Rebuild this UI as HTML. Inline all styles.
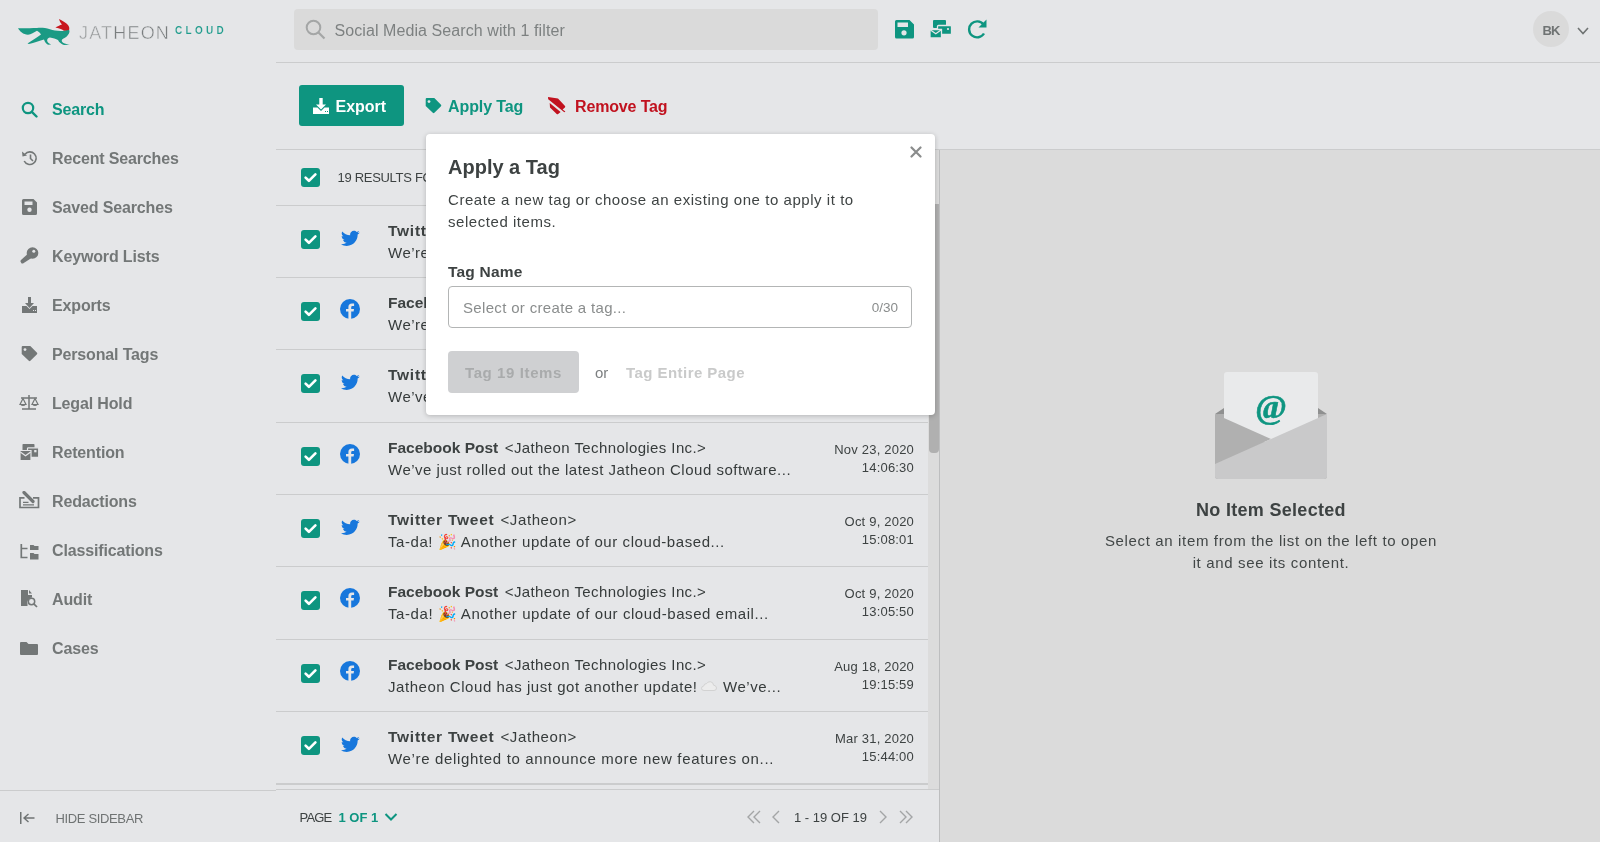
<!DOCTYPE html>
<html><head><meta charset="utf-8">
<style>
*{margin:0;padding:0;box-sizing:border-box}
html,body{width:1600px;height:842px;overflow:hidden;background:#e5e6e8;font-family:"Liberation Sans",sans-serif;position:relative}
body{will-change:transform}
.a{position:absolute}
.t{position:absolute;line-height:1;white-space:nowrap}
.b{font-weight:bold}
.nav{font-size:16px;font-weight:bold;color:#737777;left:52px;letter-spacing:-0.15px}
.ic{position:absolute}
.hl{position:absolute;height:1px;background:#cbcccd}
.cb{position:absolute;left:301px;width:19px;height:19px;border-radius:3px;background:#0e9580}
.cb svg{position:absolute;left:0;top:0}
.em{font-style:normal;font-size:15px;letter-spacing:0}
.cld{display:inline-block;vertical-align:1px;margin:0 1px 0 -1px}
.ttl{font-size:15.5px;font-weight:bold;color:#3d4242;left:388px}
.snd{font-size:15px;font-weight:normal;color:#363b3b;letter-spacing:0.4px;margin-left:6.5px}
.body{font-size:15px;color:#363b3b;left:388px;letter-spacing:0.5px}
.dt{font-size:13px;color:#3d4242;right:686px;text-align:right;letter-spacing:0.2px}
</style></head><body>

<!-- SIDEBAR -->
<div class="a" id="sidebar" style="left:0;top:0;width:276px;height:842px;background:#e5e6e8"></div>

<!-- logo -->
<svg class="a" style="left:15px;top:15px" width="60" height="33" viewBox="0 0 60 33">
<path d="M3 13.3 C9 13.5 16 13.2 22 13 C26 12.6 30 12.8 35 14.3 C39 15.6 44 16.2 49 15.7 L54 14 L54.5 16.8 C54 19 52.5 21.5 49.5 23 C46.5 24 46 26 48 27.8 C50 29 53 29.3 54.8 29.8 L49 30 C46.5 29 44 27.5 43 25 C41 24 38 23 35 22.5 C32 23 31.5 25.5 33 27.5 C34 28.5 35.5 29 36 29.5 L33 29.8 C31 28.5 29.5 26.5 29 24.5 C25 25.5 19 28 14 29 L12.5 28.5 C17 25.5 22 22.5 26 19.5 C25 18 23.5 16.5 22 15.8 C19 17.5 16 19.5 13 19.8 C8 19.5 5 16.5 3 13.3 Z" fill="#1a9a84"/>
<path d="M44.1 3.9 C47 5.5 51 7.5 53 10 C54.5 12 54.5 13.5 54 14.9 L49 15.7 C47 14.3 45 13.5 40.4 12.5 C42 11.5 45 10 47 9.4 C45.5 8 44.5 6 44.1 3.9 Z" fill="#c8161e"/>
</svg>
<div class="t" style="left:79px;top:23.5px;font-size:18px;color:#7a7e7f;letter-spacing:1.2px;-webkit-text-stroke:0.45px #e5e6e8"><span style="color:#999c9d">JAT</span>HEON</div>
<div class="t b" style="left:175px;top:25.5px;font-size:10px;color:#1f9c8c;letter-spacing:3.3px;-webkit-text-stroke:0.15px #e5e6e8">CLOUD</div>

<!-- nav -->
<svg class="ic" style="left:21px;top:101px" width="17" height="17" viewBox="0 0 17 17"><circle cx="7" cy="7" r="5.2" fill="none" stroke="#0e9580" stroke-width="2.2"/><path d="M10.8 10.8 L15.5 15.5" stroke="#0e9580" stroke-width="2.4" stroke-linecap="round"/></svg>
<div class="t nav" style="top:101.5px;color:#0e9580">Search</div>

<svg class="ic" style="left:21px;top:150px" width="17" height="16" viewBox="0 0 17 16"><path d="M4 4.2 A6.3 6.3 0 1 1 3.2 11" fill="none" stroke="#737777" stroke-width="1.6"/><path d="M1 1.5 L1.5 6.5 L6 5.5 Z" fill="#737777"/><path d="M9.5 4.5 V8.5 L12 11" fill="none" stroke="#737777" stroke-width="1.6"/></svg>
<div class="t nav" style="top:150.5px">Recent Searches</div>

<svg class="ic" style="left:22px;top:199px" width="15" height="16" viewBox="0 0 15 16"><path d="M1.5 0 H11.5 L15 3.5 V14.5 Q15 16 13.5 16 H1.5 Q0 16 0 14.5 V1.5 Q0 0 1.5 0 Z M2.5 2.5 V6 H10.5 V2.5 Z" fill="#737777" fill-rule="evenodd"/><circle cx="7.5" cy="10.8" r="2.2" fill="#e5e6e8"/></svg>
<div class="t nav" style="top:199.5px">Saved Searches</div>

<svg class="ic" style="left:20px;top:247px" width="19" height="17" viewBox="0 0 19 17"><circle cx="12.5" cy="6" r="5.8" fill="#737777"/><path d="M8.2 6.5 L1 13 Q0.2 13.8 0.6 14.8 L1.4 16.2 Q2 16.8 3 16.4 L11.5 11 Z" fill="#737777"/><circle cx="13.8" cy="4.3" r="1.5" fill="#e5e6e8"/></svg>
<div class="t nav" style="top:248.5px">Keyword Lists</div>

<svg class="ic" style="left:22px;top:297px" width="15" height="16" viewBox="0 0 15 16"><path d="M6 0 H9 V6 H12 L7.5 11 L3 6 H6 Z" fill="#737777"/><path d="M0 9 H4.5 L7.5 12 L10.5 9 H15 V16 H0 Z" fill="#737777"/><path d="M11 13.5 H12 M13 13.5 H14" stroke="#e5e6e8" stroke-width="1"/></svg>
<div class="t nav" style="top:297.5px">Exports</div>

<svg class="ic" style="left:21px;top:346px" width="17" height="16" viewBox="0 0 17 16"><path d="M0.7 1 Q0.7 0 1.7 0 H9.3 L16 6.8 Q16.6 7.6 16 8.2 L9.4 14.8 Q8.6 15.5 7.8 14.8 L0.7 8 Z" fill="#737777"/><circle cx="4" cy="3.6" r="1.4" fill="#e5e6e8"/></svg>
<div class="t nav" style="top:346.5px">Personal Tags</div>

<svg class="ic" style="left:19px;top:394px" width="20" height="17" viewBox="0 0 20 17"><path d="M10 1 V15 M3 15 H17 M2 4 H18" stroke="#737777" stroke-width="1.5" fill="none"/><path d="M4 4.5 L1 10.5 H7 Z M16 4.5 L13 10.5 H19 Z" fill="none" stroke="#737777" stroke-width="1.2"/><path d="M1 10.5 Q4 13.5 7 10.5 Z M13 10.5 Q16 13.5 19 10.5 Z" fill="#737777"/></svg>
<div class="t nav" style="top:395.5px">Legal Hold</div>

<svg class="ic" style="left:20px;top:444px" width="19" height="17" viewBox="0 0 19 17"><rect x="2.5" y="0" width="12" height="8" rx="0.8" fill="#737777"/><rect x="7.5" y="3.8" width="11.2" height="9.5" rx="0.8" fill="#737777" stroke="#e5e6e8" stroke-width="1.2"/><rect x="14.2" y="6" width="2.3" height="2.3" fill="#e5e6e8"/><path d="M0 6.5 H11 V16.5 H0 Z" fill="#737777" stroke="#e5e6e8" stroke-width="1.2"/><path d="M0.3 8 L5.5 11.8 L10.7 8" fill="none" stroke="#e5e6e8" stroke-width="1.3"/></svg>
<div class="t nav" style="top:444.5px">Retention</div>

<svg class="ic" style="left:19px;top:491px" width="21" height="18" viewBox="0 0 21 18"><path d="M5.5 6.8 H1 V16.5 H19.5 V6.8 H14" fill="none" stroke="#737777" stroke-width="1.7"/><path d="M5 1.5 L14 10.5" stroke="#737777" stroke-width="3.2" stroke-linecap="round"/><path d="M4 11.3 H9.5 M4 13.8 H15" stroke="#737777" stroke-width="1.3"/></svg>
<div class="t nav" style="top:493.5px">Redactions</div>

<svg class="ic" style="left:20px;top:544px" width="19" height="16" viewBox="0 0 19 16"><path d="M1.3 0 V13.5 H7.5 M1.3 4.5 H7.5" fill="none" stroke="#737777" stroke-width="1.7"/><path d="M10 1 H13.5 L14.5 2 H18.5 V6 H10 Z M10 9 H13.5 L14.5 10 H18.5 V15.5 H10 Z" fill="#737777"/></svg>
<div class="t nav" style="top:542.5px">Classifications</div>

<svg class="ic" style="left:21px;top:590px" width="17" height="18" viewBox="0 0 17 18"><path d="M0 0 H7 V5 H11 V7.5 A5 5 0 0 0 6.5 14 V16 H0 Z" fill="#737777"/><path d="M8 0 L11 3.5 H8 Z" fill="#737777"/><circle cx="10.5" cy="11.5" r="3.2" fill="none" stroke="#737777" stroke-width="1.5"/><path d="M12.8 13.8 L16 17" stroke="#737777" stroke-width="1.7"/></svg>
<div class="t nav" style="top:591.5px">Audit</div>

<svg class="ic" style="left:20px;top:642px" width="18" height="13" viewBox="0 0 18 13"><path d="M0 1 Q0 0 1 0 H6.5 L8.5 2 H17 Q18 2 18 3 V12 Q18 13 17 13 H1 Q0 13 0 12 Z" fill="#737777"/></svg>
<div class="t nav" style="top:640.5px">Cases</div>

<div class="hl" style="left:0;top:790px;width:276px"></div>
<svg class="ic" style="left:20px;top:812px" width="15" height="12" viewBox="0 0 15 12"><path d="M0.75 0 V12" stroke="#6f7373" stroke-width="1.5"/><path d="M4 6 H14.5 M8.5 2 L4 6 L8.5 10" fill="none" stroke="#6f7373" stroke-width="1.4"/></svg>
<div class="t" style="left:55.5px;top:812px;font-size:13px;color:#6f7373;letter-spacing:-0.35px">HIDE SIDEBAR</div>

<!-- TOP BAR -->
<div class="a" style="left:294px;top:9px;width:584px;height:41px;background:#dadada;border-radius:4px"></div>
<svg class="ic" style="left:305px;top:19px" width="21" height="21" viewBox="0 0 21 21"><circle cx="8.5" cy="8.5" r="6.8" fill="none" stroke="#a4a6a6" stroke-width="2"/><path d="M13.5 13.5 L19.5 19.5" stroke="#a4a6a6" stroke-width="2.2"/></svg>
<div class="t" style="left:334.5px;top:22.5px;font-size:16px;color:#7d8181;letter-spacing:0.08px">Social Media Search with 1 filter</div>

<svg class="ic" style="left:895px;top:20px" width="19" height="19" viewBox="0 0 19 19"><path d="M1.5 0 H14.5 L19 4.5 V17 Q19 18.5 17.5 18.5 H1.5 Q0 18.5 0 17 V1.5 Q0 0 1.5 0 Z M2.5 2.5 V7 H13 V2.5 Z" fill="#0e9580" fill-rule="evenodd"/><circle cx="9" cy="12.8" r="2.6" fill="#e5e6e8"/></svg>
<svg class="ic" style="left:930px;top:20px" width="22" height="18" viewBox="0 0 22 18"><rect x="3" y="0" width="13" height="8" rx="1" fill="#0e9580"/><rect x="7.5" y="5.5" width="14" height="9" rx="1" fill="#0e9580" stroke="#e5e6e8" stroke-width="1.3"/><circle cx="18" cy="9" r="1.1" fill="#e5e6e8"/><path d="M0 9.5 H11.5 V18 H0 Z" fill="#0e9580" stroke="#e5e6e8" stroke-width="1.3"/><path d="M0.5 10 L5.8 13.8 L11 10" fill="none" stroke="#e5e6e8" stroke-width="1.3"/></svg>
<svg class="ic" style="left:967px;top:19px" width="21" height="20" viewBox="0 0 21 20"><path d="M16.5 5.5 A8 8 0 1 0 17 14.5" fill="none" stroke="#0e9580" stroke-width="2.4"/><path d="M19.5 0.5 V8.5 H11.5 Z" fill="#0e9580"/></svg>

<div class="a" style="left:1533px;top:11px;width:36px;height:36px;border-radius:50%;background:#dadada"></div>
<div class="t b" style="left:1542.5px;top:23.5px;font-size:13px;color:#6f7373;letter-spacing:-0.8px">BK</div>
<svg class="ic" style="left:1577px;top:27px" width="12" height="8" viewBox="0 0 12 8"><path d="M1 1 L6 6.5 L11 1" fill="none" stroke="#6f7373" stroke-width="1.6"/></svg>

<div class="hl" style="left:276px;top:62px;width:1324px"></div>

<!-- TOOLBAR -->
<div class="a" style="left:299px;top:85px;width:105px;height:41px;background:#0e9580;border-radius:3px"></div>
<svg class="ic" style="left:313px;top:98px" width="16" height="16" viewBox="0 0 16 16"><path d="M6.3 0 H9.7 V6.5 H13 L8 11.5 L3 6.5 H6.3 Z" fill="#fff"/><path d="M0 9.5 H4.5 L8 13 L11.5 9.5 H16 V16 H0 Z" fill="#fff"/><path d="M12 13.5 H13 M14 13.5 H15" stroke="#0e9580" stroke-width="1"/></svg>
<div class="t b" style="left:335.5px;top:99px;font-size:16px;color:#fff">Export</div>

<svg class="ic" style="left:425px;top:98px" width="17" height="16" viewBox="0 0 17 16"><path d="M0.7 1 Q0.7 0 1.7 0 H9.3 L16 6.8 Q16.6 7.6 16 8.2 L9.4 14.8 Q8.6 15.5 7.8 14.8 L0.7 8 Z" fill="#0e9580"/><circle cx="4" cy="3.6" r="1.4" fill="#e5e6e8"/></svg>
<div class="t b" style="left:448px;top:99px;font-size:16px;color:#0e9580;letter-spacing:-0.1px">Apply Tag</div>

<svg class="ic" style="left:545px;top:95px" width="25" height="21" viewBox="0 0 25 21"><path d="M3 2 L13 3.6 L20 11 Q20.6 11.8 19.9 12.5 L17.6 14.4 L20.4 16.4 L19.3 17.2 L3.2 4.3 Z" fill="#c1121f"/><path d="M4.7 8 L15.6 16.9 L12.8 19.2 Q12.3 19.6 11.7 19 L5 12.4 Z" fill="#c1121f"/></svg>
<div class="t b" style="left:575px;top:99px;font-size:16px;color:#c1121f;letter-spacing:-0.15px">Remove Tag</div>

<div class="hl" style="left:276px;top:149px;width:1324px"></div>

<!-- RIGHT PANEL -->
<div class="a" style="left:939px;top:150px;width:661px;height:692px;background:#dbdbdb;border-left:1px solid #bdbebf"></div>

<!-- LIST -->

<div class="hl" style="left:276px;top:205px;width:652px"></div>
<div class="cb" style="top:168px"><svg width="19" height="19" viewBox="0 0 19 19"><path d="M4.6 9.6 L7.9 12.8 L14.4 6.3" fill="none" stroke="#fff" stroke-width="2.6" stroke-linecap="round" stroke-linejoin="round"/></svg></div>
<div class="t" style="left:337.5px;top:171px;font-size:13px;color:#3d4242;letter-spacing:-0.3px">19 RESULTS FOR SOCIAL MEDIA SEARCH</div>
<!-- scrollbar -->
<div class="a" style="left:928px;top:150px;width:11px;height:640px;background:#dcdcdc"></div>
<div class="a" style="left:929px;top:204px;width:10px;height:249px;background:#b0b0b0;border-radius:0 0 4px 4px"></div>
<div class="hl" style="left:276px;top:277px;width:652px"></div>
<div class="cb" style="top:230px"><svg width="19" height="19" viewBox="0 0 19 19"><path d="M4.6 9.6 L7.9 12.8 L14.4 6.3" fill="none" stroke="#fff" stroke-width="2.6" stroke-linecap="round" stroke-linejoin="round"/></svg></div>
<svg class="ic" style="left:340.5px;top:229.5px" width="19" height="17" viewBox="0 0 24 20"><path d="M23.6 2.4c-.9.4-1.8.6-2.8.8 1-.6 1.8-1.6 2.1-2.7-.9.6-2 1-3.1 1.2C19 .7 17.7.1 16.3.1c-2.7 0-4.8 2.2-4.8 4.8 0 .4 0 .8.1 1.1C7.5 5.8 3.9 3.9 1.6 1 1.2 1.7.9 2.6.9 3.5c0 1.7.9 3.2 2.2 4-.8 0-1.5-.2-2.2-.6v.1c0 2.3 1.7 4.3 3.9 4.7-.4.1-.8.2-1.3.2-.3 0-.6 0-.9-.1.6 1.9 2.4 3.3 4.5 3.4-1.7 1.3-3.7 2.1-6 2.1-.4 0-.8 0-1.2-.1 2.1 1.4 4.7 2.2 7.4 2.2 8.9 0 13.7-7.4 13.7-13.7v-.6c1-.7 1.8-1.6 2.5-2.5z" fill="#1777dc"/></svg>
<div class="t ttl" style="top:223.2px"><span style="letter-spacing:0.75px">Twitter Tweet</span><span class="snd" style="letter-spacing:0.6px;margin-left:6px">&lt;Jatheon&gt;</span></div>
<div class="t body" style="top:244.9px;letter-spacing:0.50px">We’re excited to share our latest product update...</div>
<div class="t dt" style="top:226.0px">Jan 12, 2021</div>
<div class="t dt" style="top:244.0px">10:21:44</div>
<div class="hl" style="left:276px;top:349px;width:652px"></div>
<div class="cb" style="top:302px"><svg width="19" height="19" viewBox="0 0 19 19"><path d="M4.6 9.6 L7.9 12.8 L14.4 6.3" fill="none" stroke="#fff" stroke-width="2.6" stroke-linecap="round" stroke-linejoin="round"/></svg></div>
<svg class="ic" style="left:340px;top:299px" width="20" height="20" viewBox="0 0 20 20"><circle cx="10" cy="10" r="10" fill="#1777dc"/><path d="M11.2 20 V12.6 H13.6 L14 9.9 H11.2 V8.2 Q11.2 7 12.4 7 H14.1 V4.6 Q13.2 4.4 12 4.4 Q8.4 4.4 8.4 8 V9.9 H6 V12.6 H8.4 V20 Z" fill="#e5e6e8"/></svg>
<div class="t ttl" style="top:295.2px">Facebook Post<span class="snd">&lt;Jatheon Technologies Inc.&gt;</span></div>
<div class="t body" style="top:316.9px;letter-spacing:0.50px">We’re excited to share our latest product update...</div>
<div class="t dt" style="top:298.0px">Jan 12, 2021</div>
<div class="t dt" style="top:316.0px">10:20:13</div>
<div class="hl" style="left:276px;top:422px;width:652px"></div>
<div class="cb" style="top:374px"><svg width="19" height="19" viewBox="0 0 19 19"><path d="M4.6 9.6 L7.9 12.8 L14.4 6.3" fill="none" stroke="#fff" stroke-width="2.6" stroke-linecap="round" stroke-linejoin="round"/></svg></div>
<svg class="ic" style="left:340.5px;top:373.5px" width="19" height="17" viewBox="0 0 24 20"><path d="M23.6 2.4c-.9.4-1.8.6-2.8.8 1-.6 1.8-1.6 2.1-2.7-.9.6-2 1-3.1 1.2C19 .7 17.7.1 16.3.1c-2.7 0-4.8 2.2-4.8 4.8 0 .4 0 .8.1 1.1C7.5 5.8 3.9 3.9 1.6 1 1.2 1.7.9 2.6.9 3.5c0 1.7.9 3.2 2.2 4-.8 0-1.5-.2-2.2-.6v.1c0 2.3 1.7 4.3 3.9 4.7-.4.1-.8.2-1.3.2-.3 0-.6 0-.9-.1.6 1.9 2.4 3.3 4.5 3.4-1.7 1.3-3.7 2.1-6 2.1-.4 0-.8 0-1.2-.1 2.1 1.4 4.7 2.2 7.4 2.2 8.9 0 13.7-7.4 13.7-13.7v-.6c1-.7 1.8-1.6 2.5-2.5z" fill="#1777dc"/></svg>
<div class="t ttl" style="top:367.2px"><span style="letter-spacing:0.75px">Twitter Tweet</span><span class="snd" style="letter-spacing:0.6px;margin-left:6px">&lt;Jatheon&gt;</span></div>
<div class="t body" style="top:388.9px;letter-spacing:0.50px">We’ve just rolled out the latest Jatheon Cloud...</div>
<div class="t dt" style="top:370.0px">Nov 23, 2020</div>
<div class="t dt" style="top:388.0px">14:07:02</div>
<div class="hl" style="left:276px;top:494px;width:652px"></div>
<div class="cb" style="top:447px"><svg width="19" height="19" viewBox="0 0 19 19"><path d="M4.6 9.6 L7.9 12.8 L14.4 6.3" fill="none" stroke="#fff" stroke-width="2.6" stroke-linecap="round" stroke-linejoin="round"/></svg></div>
<svg class="ic" style="left:340px;top:444px" width="20" height="20" viewBox="0 0 20 20"><circle cx="10" cy="10" r="10" fill="#1777dc"/><path d="M11.2 20 V12.6 H13.6 L14 9.9 H11.2 V8.2 Q11.2 7 12.4 7 H14.1 V4.6 Q13.2 4.4 12 4.4 Q8.4 4.4 8.4 8 V9.9 H6 V12.6 H8.4 V20 Z" fill="#e5e6e8"/></svg>
<div class="t ttl" style="top:440.2px">Facebook Post<span class="snd">&lt;Jatheon Technologies Inc.&gt;</span></div>
<div class="t body" style="top:461.9px;letter-spacing:0.50px">We’ve just rolled out the latest Jatheon Cloud software...</div>
<div class="t dt" style="top:443.0px">Nov 23, 2020</div>
<div class="t dt" style="top:461.0px">14:06:30</div>
<div class="hl" style="left:276px;top:566px;width:652px"></div>
<div class="cb" style="top:519px"><svg width="19" height="19" viewBox="0 0 19 19"><path d="M4.6 9.6 L7.9 12.8 L14.4 6.3" fill="none" stroke="#fff" stroke-width="2.6" stroke-linecap="round" stroke-linejoin="round"/></svg></div>
<svg class="ic" style="left:340.5px;top:518.5px" width="19" height="17" viewBox="0 0 24 20"><path d="M23.6 2.4c-.9.4-1.8.6-2.8.8 1-.6 1.8-1.6 2.1-2.7-.9.6-2 1-3.1 1.2C19 .7 17.7.1 16.3.1c-2.7 0-4.8 2.2-4.8 4.8 0 .4 0 .8.1 1.1C7.5 5.8 3.9 3.9 1.6 1 1.2 1.7.9 2.6.9 3.5c0 1.7.9 3.2 2.2 4-.8 0-1.5-.2-2.2-.6v.1c0 2.3 1.7 4.3 3.9 4.7-.4.1-.8.2-1.3.2-.3 0-.6 0-.9-.1.6 1.9 2.4 3.3 4.5 3.4-1.7 1.3-3.7 2.1-6 2.1-.4 0-.8 0-1.2-.1 2.1 1.4 4.7 2.2 7.4 2.2 8.9 0 13.7-7.4 13.7-13.7v-.6c1-.7 1.8-1.6 2.5-2.5z" fill="#1777dc"/></svg>
<div class="t ttl" style="top:512.2px"><span style="letter-spacing:0.75px">Twitter Tweet</span><span class="snd" style="letter-spacing:0.6px;margin-left:6px">&lt;Jatheon&gt;</span></div>
<div class="t body" style="top:533.9px;letter-spacing:0.57px">Ta-da! <i class="em">🎉</i> Another update of our cloud-based...</div>
<div class="t dt" style="top:515.0px">Oct 9, 2020</div>
<div class="t dt" style="top:533.0px">15:08:01</div>
<div class="hl" style="left:276px;top:639px;width:652px"></div>
<div class="cb" style="top:591px"><svg width="19" height="19" viewBox="0 0 19 19"><path d="M4.6 9.6 L7.9 12.8 L14.4 6.3" fill="none" stroke="#fff" stroke-width="2.6" stroke-linecap="round" stroke-linejoin="round"/></svg></div>
<svg class="ic" style="left:340px;top:588px" width="20" height="20" viewBox="0 0 20 20"><circle cx="10" cy="10" r="10" fill="#1777dc"/><path d="M11.2 20 V12.6 H13.6 L14 9.9 H11.2 V8.2 Q11.2 7 12.4 7 H14.1 V4.6 Q13.2 4.4 12 4.4 Q8.4 4.4 8.4 8 V9.9 H6 V12.6 H8.4 V20 Z" fill="#e5e6e8"/></svg>
<div class="t ttl" style="top:584.2px">Facebook Post<span class="snd">&lt;Jatheon Technologies Inc.&gt;</span></div>
<div class="t body" style="top:605.9px;letter-spacing:0.58px">Ta-da! <i class="em">🎉</i> Another update of our cloud-based email...</div>
<div class="t dt" style="top:587.0px">Oct 9, 2020</div>
<div class="t dt" style="top:605.0px">13:05:50</div>
<div class="hl" style="left:276px;top:711px;width:652px"></div>
<div class="cb" style="top:664px"><svg width="19" height="19" viewBox="0 0 19 19"><path d="M4.6 9.6 L7.9 12.8 L14.4 6.3" fill="none" stroke="#fff" stroke-width="2.6" stroke-linecap="round" stroke-linejoin="round"/></svg></div>
<svg class="ic" style="left:340px;top:661px" width="20" height="20" viewBox="0 0 20 20"><circle cx="10" cy="10" r="10" fill="#1777dc"/><path d="M11.2 20 V12.6 H13.6 L14 9.9 H11.2 V8.2 Q11.2 7 12.4 7 H14.1 V4.6 Q13.2 4.4 12 4.4 Q8.4 4.4 8.4 8 V9.9 H6 V12.6 H8.4 V20 Z" fill="#e5e6e8"/></svg>
<div class="t ttl" style="top:657.2px">Facebook Post<span class="snd">&lt;Jatheon Technologies Inc.&gt;</span></div>
<div class="t body" style="top:678.9px;letter-spacing:0.54px">Jatheon Cloud has just got another update! <svg class="cld" width="16" height="10" viewBox="0 0 16 10"><path d="M3 9.5 Q0.5 9.5 0.5 7.3 Q0.5 5.3 2.7 5.1 Q3 2.6 5.6 2.6 Q6.8 0.5 9.3 0.7 Q12.3 1 12.6 4.2 Q15.5 4.5 15.5 7 Q15.5 9.5 13 9.5 Z" fill="#ececec" stroke="#cfcfcf" stroke-width="0.9"/></svg> We’ve...</div>
<div class="t dt" style="top:660.0px">Aug 18, 2020</div>
<div class="t dt" style="top:678.0px">19:15:59</div>
<div class="hl" style="left:276px;top:783px;width:652px"></div>
<div class="cb" style="top:736px"><svg width="19" height="19" viewBox="0 0 19 19"><path d="M4.6 9.6 L7.9 12.8 L14.4 6.3" fill="none" stroke="#fff" stroke-width="2.6" stroke-linecap="round" stroke-linejoin="round"/></svg></div>
<svg class="ic" style="left:340.5px;top:735.5px" width="19" height="17" viewBox="0 0 24 20"><path d="M23.6 2.4c-.9.4-1.8.6-2.8.8 1-.6 1.8-1.6 2.1-2.7-.9.6-2 1-3.1 1.2C19 .7 17.7.1 16.3.1c-2.7 0-4.8 2.2-4.8 4.8 0 .4 0 .8.1 1.1C7.5 5.8 3.9 3.9 1.6 1 1.2 1.7.9 2.6.9 3.5c0 1.7.9 3.2 2.2 4-.8 0-1.5-.2-2.2-.6v.1c0 2.3 1.7 4.3 3.9 4.7-.4.1-.8.2-1.3.2-.3 0-.6 0-.9-.1.6 1.9 2.4 3.3 4.5 3.4-1.7 1.3-3.7 2.1-6 2.1-.4 0-.8 0-1.2-.1 2.1 1.4 4.7 2.2 7.4 2.2 8.9 0 13.7-7.4 13.7-13.7v-.6c1-.7 1.8-1.6 2.5-2.5z" fill="#1777dc"/></svg>
<div class="t ttl" style="top:729.2px"><span style="letter-spacing:0.75px">Twitter Tweet</span><span class="snd" style="letter-spacing:0.6px;margin-left:6px">&lt;Jatheon&gt;</span></div>
<div class="t body" style="top:750.9px;letter-spacing:0.66px">We’re delighted to announce more new features on...</div>
<div class="t dt" style="top:732.0px">Mar 31, 2020</div>
<div class="t dt" style="top:750.0px">15:44:00</div>

<div class="hl" style="left:276px;top:784px;width:652px"></div>
<div class="hl" style="left:276px;top:789px;width:663px"></div>
<div class="t" style="left:299.5px;top:811px;font-size:13px;color:#3d4242;letter-spacing:-0.8px">PAGE</div>
<div class="t b" style="left:338.5px;top:811px;font-size:13px;color:#0e9580">1 OF 1</div>
<svg class="ic" style="left:384px;top:812px" width="14" height="10" viewBox="0 0 14 10"><path d="M1.5 2 L7 7.5 L12.5 2" fill="none" stroke="#0e9580" stroke-width="2"/></svg>
<svg class="ic" style="left:746px;top:810px" width="17" height="14" viewBox="0 0 17 14"><path d="M8 1 L2 7 L8 13 M14 1 L8 7 L14 13" fill="none" stroke="#a3a5a6" stroke-width="1.4"/></svg>
<svg class="ic" style="left:771px;top:810px" width="10" height="14" viewBox="0 0 10 14"><path d="M8 1 L2 7 L8 13" fill="none" stroke="#a3a5a6" stroke-width="1.4"/></svg>
<div class="t" style="left:794px;top:811px;font-size:13px;color:#3d4242">1 - 19 OF 19</div>
<svg class="ic" style="left:878px;top:810px" width="10" height="14" viewBox="0 0 10 14"><path d="M2 1 L8 7 L2 13" fill="none" stroke="#a3a5a6" stroke-width="1.4"/></svg>
<svg class="ic" style="left:897px;top:810px" width="17" height="14" viewBox="0 0 17 14"><path d="M3 1 L9 7 L3 13 M9 1 L15 7 L9 13" fill="none" stroke="#a3a5a6" stroke-width="1.4"/></svg>


<!-- MODAL -->
<!-- envelope -->
<svg class="ic" style="left:1215px;top:372px" width="112" height="107" viewBox="0 0 112 107">
<path d="M0 42 L9 36 V46 Z M112 42 L103 36 V46 Z" fill="#8f9090"/>
<rect x="0" y="42" width="112" height="65" rx="3" fill="#b0b0b0"/>
<rect x="9" y="0" width="94" height="70" rx="3" fill="#e9eaeb"/>
<path d="M0 42 L56 67 L0 92 Z" fill="#b0b0b0"/>
<path d="M112 42 L56 67 L0 92 V104 Q0 107 3 107 H109 Q112 107 112 104 Z" fill="#c9c9ca"/>
<text x="56" y="46" text-anchor="middle" font-family="Liberation Serif" font-weight="bold" font-size="34" fill="#0e9580" stroke="#0e9580" stroke-width="0.6">@</text>
</svg>
<div class="t b" style="left:1196px;top:500.5px;font-size:18px;color:#3d4242;letter-spacing:0.3px">No Item Selected</div>
<div class="t" style="left:1104px;width:334px;text-align:center;top:530px;font-size:15px;line-height:22px;color:#424747;letter-spacing:0.65px;white-space:normal">Select an item from the list on the left to open it and see its content.</div>
<div class="a" style="left:426px;top:134px;width:509px;height:281px;background:#fff;border-radius:4px;box-shadow:0 1px 5px rgba(0,0,0,0.22)">
<svg class="ic" style="left:484px;top:12px" width="12" height="12" viewBox="0 0 12 12"><path d="M1.5 1.5 L10.5 10.5 M10.5 1.5 L1.5 10.5" stroke="#8a8c8c" stroke-width="2.2" stroke-linecap="round"/></svg>
<div class="t b" style="left:22px;top:23px;font-size:20px;color:#3d4242">Apply a Tag</div>
<div class="t" style="left:22px;top:55px;font-size:15px;line-height:22.4px;color:#3f4444;letter-spacing:0.55px;white-space:normal;width:470px">Create a new tag or choose an existing one to apply it to selected items.</div>
<div class="t b" style="left:22px;top:130px;font-size:15.5px;color:#3d4242;letter-spacing:0.2px">Tag Name</div>
<div class="a" style="left:22px;top:152px;width:464px;height:42px;border:1px solid #b3b5b5;border-radius:4px"></div>
<div class="t" style="left:37px;top:166px;font-size:15px;color:#8a8d8d;letter-spacing:0.33px">Select or create a tag...</div>
<div class="t" style="right:37px;top:167px;font-size:13.5px;color:#8a8d8d">0/30</div>
<div class="a" style="left:22px;top:217px;width:131px;height:42px;background:#cfd0d2;border-radius:4px"></div>
<div class="t b" style="left:39px;top:231px;font-size:15px;color:#a9abac;letter-spacing:0.6px">Tag 19 Items</div>
<div class="t" style="left:169px;top:231px;font-size:15px;color:#7c7f80">or</div>
<div class="t b" style="left:200px;top:231px;font-size:15px;color:#c9caca;letter-spacing:0.45px">Tag Entire Page</div>
</div>


</body></html>
